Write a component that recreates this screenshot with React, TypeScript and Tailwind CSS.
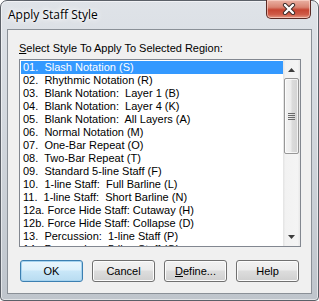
import React from "react";

const ITEMS = [
  "01.  Slash Notation (S)",
  "02.  Rhythmic Notation (R)",
  "03.  Blank Notation:  Layer 1 (B)",
  "04.  Blank Notation:  Layer 4 (K)",
  "05.  Blank Notation:  All Layers (A)",
  "06.  Normal Notation (M)",
  "07.  One-Bar Repeat (O)",
  "08.  Two-Bar Repeat (T)",
  "09.  Standard 5-line Staff (F)",
  "10.  1-line Staff:  Full Barline (L)",
  "11.  1-line Staff:  Short Barline (N)",
  "12a. Force Hide Staff: Cutaway (H)",
  "12b. Force Hide Staff: Collapse (D)",
  "13.  Percussion:  1-line Staff (P)",
  "14.  Percussion:  5-line Staff (Q)",
];

const FONT = "font-['Liberation_Sans','Arial',sans-serif]";

export default function App() {
  return (
    <div className={`w-[319px] h-[301px] ${FONT} text-[11px] text-black`}>
      <div className="w-[319px] h-[301px] flex flex-col border border-[#5b6068] rounded-t-[7px] rounded-b-[4px] bg-[linear-gradient(to_bottom,#dfe3e8_0%,#d3d8de_40%,#bfc5cc_100%)] shadow-[inset_0_0_0_1px_rgba(255,255,255,0.55)]">
        {/* Title bar */}
        <div className="h-[28px] flex justify-between shrink-0">
          <div className="pl-[7px] flex items-center">
            <span className="font-['Open_Sans','Liberation_Sans',sans-serif] text-[12px] [text-shadow:0_0_10px_#fff,0_0_6px_#fff,0_0_3px_#fff]">
              Apply Staff Style
            </span>
          </div>
          <CloseButton />
        </div>

        {/* Client */}
        <div className="mx-[6px] h-[265px] border border-[#8a9097] bg-[#f0f0f0] flex flex-col">
          <div className="mt-[12px] pl-[11px] h-[13px] leading-[13px]">
            <span className="underline underline-offset-[1px]">S</span>elect Style To Apply To Selected Region:
          </div>

          <div className="mt-[4px] ml-[11px] w-[282px] h-[188px] border border-[#828790] bg-white flex">
            <div className="flex-1 pl-[1px] pt-[1px] overflow-hidden">
              {ITEMS.map((item, i) => (
                <div
                  key={item}
                  className={`h-[13px] leading-[13px] pl-[2px] whitespace-pre ${
                    i === 0 ? "bg-[#3399ff] text-white" : ""
                  }`}
                >
                  {item}
                </div>
              ))}
            </div>
            <Scrollbar />
          </div>

          <div className="mt-[13px] ml-[12px] flex gap-[9px]">
            <Button primary>OK</Button>
            <Button>Cancel</Button>
            <Button>
              <span className="underline underline-offset-[1px]">D</span>efine...
            </Button>
            <Button>Help</Button>
          </div>
        </div>
      </div>
    </div>
  );
}

function CloseButton() {
  return (
    <div className="mr-[7px] w-[45px] h-[19px] -mt-[1px] border border-[#5a2a24] border-t-0 rounded-b-[5px] bg-[linear-gradient(to_bottom,#eab2a4_0%,#d98472_40%,#c64532_55%,#cf5b47_80%,#e39a86_100%)] shadow-[inset_0_0_0_1px_rgba(255,220,210,0.6)] flex items-center justify-center">
      <svg width="14" height="12" viewBox="0 0 14 12">
        <path d="M3 2 L11 10 M11 2 L3 10" stroke="#3a2a28" strokeWidth="4.2" strokeLinecap="round" />
        <path d="M3 2 L11 10 M11 2 L3 10" stroke="#ffffff" strokeWidth="2.4" strokeLinecap="round" />
      </svg>
    </div>
  );
}

function Scrollbar() {
  return (
    <div className="w-[17px] flex flex-col bg-[linear-gradient(to_right,#e3e3e3_0%,#f2f2f2_15%,#f4f4f4_85%,#e8e8e8_100%)]">
      <div className="h-[17px] flex items-center justify-center pt-[2px]">
        <svg width="7" height="4" viewBox="0 0 7 4">
          <polygon points="3.5,0 7,4 0,4" fill="#3d3d3d" />
        </svg>
      </div>
      <div className="flex-1 pt-[1px]">
        <div className="mx-[1px] h-[76px] border border-[#979797] rounded-[2px] bg-[linear-gradient(to_right,#f3f3f3_0%,#ececec_45%,#dbdbdb_55%,#d3d3d3_100%)] shadow-[inset_0_0_0_1px_rgba(255,255,255,0.7)] flex flex-col items-center justify-center gap-[1px]">
          {[0, 1, 2, 3].map((k) => (
            <div key={k} className="w-[7px] h-[1px] bg-[#6b6b6b]" />
          ))}
        </div>
      </div>
      <div className="h-[17px] flex items-center justify-center pb-[1px]">
        <svg width="7" height="4" viewBox="0 0 7 4">
          <polygon points="0,0 7,0 3.5,4" fill="#3d3d3d" />
        </svg>
      </div>
    </div>
  );
}

function Button({ children, primary }: { children: React.ReactNode; primary?: boolean }) {
  return (
    <div
      className={`w-[63px] h-[22px] rounded-[3px] border flex items-center justify-center ${
        primary
          ? "border-[#3c7fb1] bg-[linear-gradient(to_bottom,#eaf6fd_0%,#dcf0fb_45%,#c9e7f8_50%,#b8dcf1_100%)] shadow-[inset_0_0_0_1px_#a6d3ef]"
          : "border-[#707070] bg-[linear-gradient(to_bottom,#f2f2f2_0%,#ebebeb_45%,#dddddd_50%,#cfcfcf_100%)] shadow-[inset_0_0_0_1px_#fcfcfc]"
      }`}
    >
      {children}
    </div>
  );
}
